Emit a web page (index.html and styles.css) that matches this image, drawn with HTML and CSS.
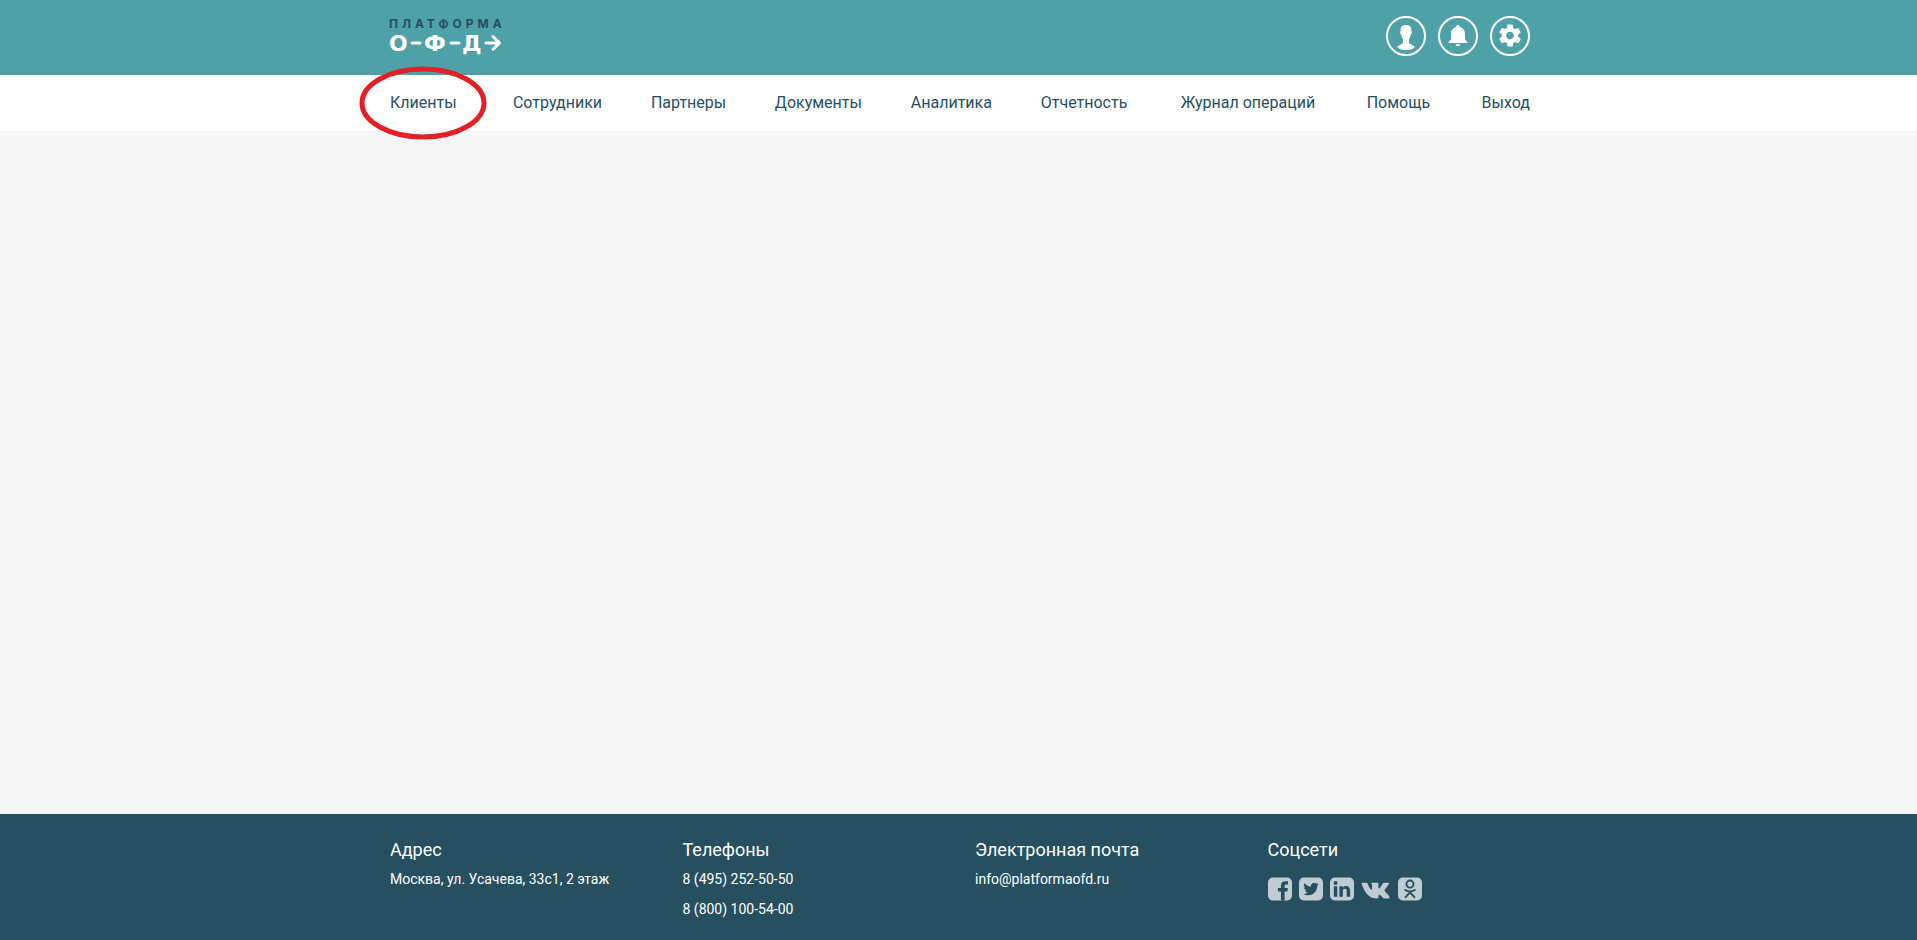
FILE: index.html
```html
<!DOCTYPE html>
<html lang="ru">
<head>
<meta charset="utf-8">
<meta name="viewport" content="width=device-width, initial-scale=1">
<title>Платформа ОФД</title>
<link rel="stylesheet" href="styles.css">
</head>
<body>
<header class="header">
  <div class="container header-row">
    <a class="logo" href="#" aria-label="Платформа ОФД">
      <svg width="114" height="40" viewBox="0 0 114 40">
        <text class="logo-name" x="-1" y="12">ПЛАТФОРМА</text>
        <g class="logo-letters">
          <text x="-1" y="35">О</text>
          <text x="34" y="35">Ф</text>
          <text x="72" y="35">Д</text>
        </g>
        <path class="logo-lines" d="M22 27h8M61 27h8M96 27h13M103 20.500l6.500 6.500l-6.500 6.500"/>
      </svg>
    </a>
    <div class="tools">
      <button class="tool" type="button" aria-label="Профиль">
        <svg width="36" height="36" viewBox="0 0 36 36"><path d="M18 7c-4 0-5.600 2-5.300 6-.8 0-.5 3.500.7 4 .4 2 1 3.500 1.600 4.300v3.200c-.4 2.300-4.500 2.300-6 4.500 2.500 2.500 5.500 3 9 3s6.500-.5 9-3c-1.500-2.200-5.600-2.200-6-4.500v-3.200c.6-.8 1.200-2.300 1.600-4.300 1.200-.5 1.500-4 .7-4C23.600 9 22 7 18 7z"/></svg>
      </button>
      <button class="tool" type="button" aria-label="Уведомления">
        <svg width="36" height="36" viewBox="0 0 36 36"><path d="M18 7c-1.200 0-1.900.8-1.900 1.900-3.400.9-5.100 3.500-5.100 7.100v5.500l-2.500 2.800V25h19v-.7L25 21.500V16c0-3.600-1.700-6.200-5.100-7.100C19.900 7.800 19.200 7 18 7zM15.700 26.200a2.300 2 0 0 0 4.600 0z"/></svg>
      </button>
      <button class="tool" type="button" aria-label="Настройки">
        <svg width="36" height="36" viewBox="0 0 24 24"><path transform="translate(12 11.700) scale(.73) translate(-12 -12)" d="M19.430 12.980c.04-.32.070-.64.070-.98s-.03-.66-.07-.98l2.110-1.650c.19-.15.240-.42.120-.64l-2-3.460c-.12-.22-.39-.3-.61-.22l-2.490 1c-.52-.4-1.080-.73-1.690-.98l-.38-2.650C14.460 2.180 14.250 2 14 2h-4c-.25 0-.46.180-.49.420l-.38 2.650c-.61.250-1.170.590-1.690.98l-2.490-1c-.23-.09-.49 0-.61.220l-2 3.460c-.13.220-.07.490.12.640l2.110 1.650c-.04.320-.07.650-.07.980s.03.660.07.980l-2.110 1.650c-.19.150-.24.420-.12.640l2 3.460c.12.220.390.300.610.220l2.490-1c.52.400 1.080.730 1.690.980l.38 2.650c.03.240.240.420.490.420h4c.25 0 .46-.18.490-.42l.38-2.650c.61-.25 1.170-.59 1.690-.98l2.490 1c.23.090.490 0 .61-.22l2-3.460c.12-.22.070-.49-.12-.64l-2.110-1.650zM12 15.500c-1.930 0-3.500-1.570-3.500-3.500s1.570-3.500 3.500-3.500 3.500 1.570 3.500 3.500-1.570 3.500-3.500 3.500z"/></svg>
      </button>
    </div>
  </div>
</header>
<nav class="nav">
  <ul class="container nav-list">
    <li class="nav-item"><a href="#">Клиенты</a>
      <svg class="marker" width="128" height="74" viewBox="0 0 128 74" aria-hidden="true"><ellipse cx="64" cy="37" rx="61" ry="34"/></svg></li>
    <li class="nav-item"><a href="#">Сотрудники</a></li>
    <li class="nav-item"><a href="#">Партнеры</a></li>
    <li class="nav-item"><a href="#">Документы</a></li>
    <li class="nav-item"><a href="#">Аналитика</a></li>
    <li class="nav-item"><a href="#">Отчетность</a></li>
    <li class="nav-item"><a href="#">Журнал операций</a></li>
    <li class="nav-item"><a href="#">Помощь</a></li>
    <li class="nav-item"><a href="#">Выход</a></li>
  </ul>
</nav>
<main class="main">
  <svg class="haze" width="100%" height="110" aria-hidden="true"><path d="M268 54Q310 30 400 26L580 22Q650 28 690 45V62L930 60Q1030 44 1100 62L1200 68V92Q1150 104 860 101L620 96Q450 98 350 105H315V72L270 66Z"/></svg>
</main>
<footer class="footer">
  <div class="container footer-grid">
    <section class="footer-column">
      <h2 class="footer-title">Адрес</h2>
      <p class="footer-text">Москва, ул. Усачева, 33с1, 2 этаж</p>
    </section>
    <section class="footer-column">
      <h2 class="footer-title">Телефоны</h2>
      <p class="footer-text">8 (495) 252-50-50</p>
      <p class="footer-text">8 (800) 100-54-00</p>
    </section>
    <section class="footer-column">
      <h2 class="footer-title">Электронная почта</h2>
      <p class="footer-text"><a href="#">info@platformaofd.ru</a></p>
    </section>
    <section class="footer-column">
      <h2 class="footer-title">Соцсети</h2>
      <div class="social">
        <a href="#" aria-label="Facebook"><svg width="24" height="24" viewBox="0 0 25 24"><rect width="25" height="24" rx="5"/><path class="cut" d="M13.500 24v-9.500H10.300V11h3.200V8.300c0-3 1.900-4.500 4.600-4.500h2.700v3.400h-1.900c-1.300 0-1.600.6-1.600 1.600V11h3.400l-.5 3.500h-2.900V24z"/></svg></a>
        <a href="#" aria-label="Twitter"><svg width="24" height="24" viewBox="0 0 25 24"><rect width="25" height="24" rx="5"/><path class="cut" transform="translate(4.500 4) scale(.67)" d="M23.950 4.570a10 10 0 0 1-2.820.77 4.960 4.960 0 0 0 2.160-2.720c-.95.550-2 .95-3.130 1.180a4.920 4.920 0 0 0-8.380 4.480C7.690 8.090 4.070 6.130 1.640 3.160a4.920 4.920 0 0 0 1.520 6.570 4.900 4.900 0 0 1-2.230-.61v.06a4.920 4.920 0 0 0 3.950 4.830 5 5 0 0 1-2.210.08 4.940 4.940 0 0 0 4.600 3.420A9.870 9.870 0 0 1 0 19.540a14 14 0 0 0 7.550 2.210c9.050 0 14-7.500 14-13.980l-.02-.64a9.940 9.940 0 0 0 2.420-2.560z"/></svg></a>
        <a href="#" aria-label="LinkedIn"><svg width="24" height="24" viewBox="0 0 25 24"><rect width="25" height="24" rx="5"/><path class="cut" d="M4 9.200h3.600V20H4zM9.800 9.200h3.500v1.500c.7-1.100 1.800-1.800 3.400-1.800 2.700 0 4.300 1.700 4.300 4.900V20h-3.600v-5.800c0-1.500-.6-2.400-1.900-2.400s-2.100.9-2.100 2.300V20H9.800z"/><circle class="cut" cx="5.800" cy="5.800" r="2.100"/></svg></a>
        <a href="#" aria-label="ВКонтакте"><svg width="30" height="24" viewBox="0 0 31 24"><path d="M1.500 5.500h4.300c.6 0 .8.3 1 .8 1 2.900 3 6.300 4 6.300.6 0 .7-.5.700-1.300V8.400c-.1-1.500-1-1.700-1-2.300 0-.3.300-.6.700-.6h6c.6 0 .8.300.8 1v4.300c0 .6.200.8.500.8.900 0 3.200-3.600 4.100-5.500.2-.4.500-.6 1-.6h4.600c.9 0 1.200.5.800 1.200-1 2-4.700 6.100-4.700 6.800 0 .9 5 4.900 5.200 7.200.1.700-.4 1-1.200 1h-4.400c-1.500 0-3.400-3.700-4.900-3.700-.8 0-1 .6-1 2.200 0 1-.4 1.500-1.600 1.500C9.500 21.700 4.500 17.500.8 7c-.3-1 .1-1.500.7-1.500z"/></svg></a>
        <a href="#" aria-label="Одноклассники"><svg width="24" height="24" viewBox="0 0 25 24"><rect width="25" height="24" rx="5"/><circle class="line" cx="12.500" cy="6.900" r="3.700"/><path class="line" d="M7.500 13q5 3.200 10 0M12.500 15.500l-4.600 5M12.500 15.500l4.600 5"/></svg></a>
      </div>
    </section>
  </div>
</footer>
</body>
</html>
```
FILE: styles.css
```css
* { box-sizing: border-box; }
body {
  margin: 0;
  min-height: 100vh;
  display: flex;
  flex-direction: column;
  font-family: Roboto, "Liberation Sans", sans-serif;
  font-size: 16px;
  color: #264f5f;
  background: #f6f6f6;
}
a { color: inherit; text-decoration: none; }
.header, .nav, .footer { padding-left: 3px; }
.container { width: 100%; max-width: 1170px; margin: 0 auto; padding: 0 15px; }
.header { background: #4da1a7; }
.header-row {
  display: flex;
  align-items: center;
  justify-content: space-between;
  height: 75px;
  padding-bottom: 3px;
}
.logo, .logo svg { display: block; }
.logo svg { overflow: visible; }
.logo-name { font: 700 12px Inter, sans-serif; letter-spacing: 4px; fill: #264f5f; }
.logo-letters { font: 700 22px "DejaVu Sans", sans-serif; fill: #fff; }
.logo-lines { fill: none; stroke: #fff; stroke-width: 3; stroke-linecap: round; stroke-linejoin: round; }
.tools { display: flex; gap: 12px; }
.tool {
  width: 40px;
  height: 40px;
  padding: 0;
  border: 2px solid #fff;
  border-radius: 50%;
  background: none;
  cursor: pointer;
}
.tool svg { display: block; fill: #fff; }
.nav { background: #fff; }
.nav-list {
  display: grid;
  grid-template-columns: 123fr 138fr 124fr 136fr 130fr 140fr 186fr 115fr 48fr;
  list-style: none;
  line-height: 56px;
  white-space: nowrap;
}
.nav-item { position: relative; }
.marker {
  position: absolute;
  left: -31px;
  top: -9px;
  fill: none;
  stroke: #e51f26;
  stroke-width: 5;
  pointer-events: none;
}
.main { flex: 1; }
.haze { display: block; fill: #f7f7f7; }
.footer { background: #264f5f; color: #fff; padding-top: 24px; padding-bottom: 15px; }
.footer-grid { display: grid; grid-template-columns: repeat(4, 1fr); padding: 0; }
.footer-column { padding-left: 15px; }
.footer-title { margin: 0 0 3px; font-size: 18px; font-weight: 400; line-height: 24px; }
.footer-text { margin: 0 0 2px; font-size: 14px; line-height: 28px; }
.social { display: flex; gap: 7px; padding-top: 12px; }
.social svg { display: block; fill: #bfccd2; }
.social .cut { fill: #264f5f; }
.social .line { fill: none; stroke: #264f5f; stroke-width: 2; stroke-linecap: round; }
```
